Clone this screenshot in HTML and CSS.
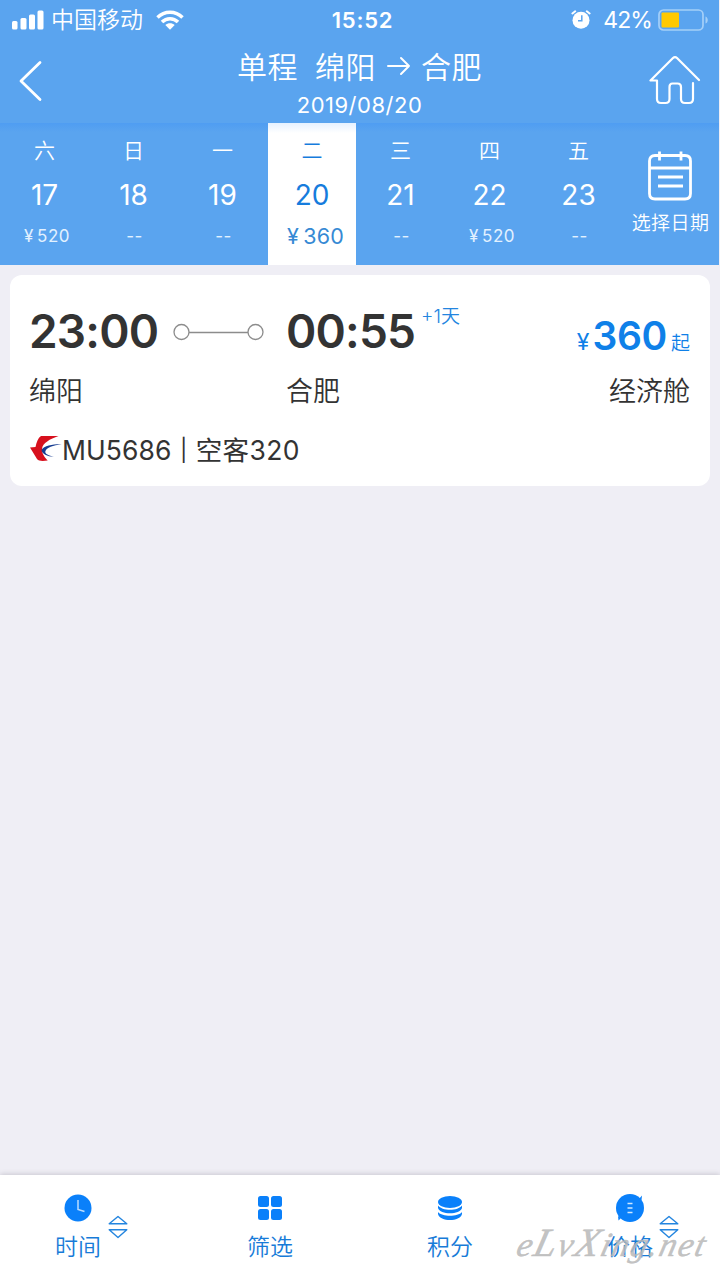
FILE: index.html
```html
<!DOCTYPE html>
<html lang="zh-CN">
<head>
<meta charset="utf-8">
<title>单程 绵阳 → 合肥</title>
<link rel="stylesheet" href="styles.css">
</head>
<body>
<div class="screen">
  <header class="header">
    <div class="status">
      <div class="status-left">
        <svg class="signal" width="32" height="20" viewBox="0 0 32 20" fill="#fff"><rect x="0" y="11" width="5.500" height="8.500" rx="1.500"/><rect x="8.500" y="8" width="6" height="11.500" rx="1.500"/><rect x="17" y="4.500" width="6" height="15" rx="1.500"/><rect x="25.500" y="0.500" width="6" height="19" rx="1.500"/></svg>
        <span class="carrier">中国移动</span>
        <svg class="wifi" width="28" height="20" viewBox="0 0 28 20"><g fill="none" stroke="#fff" stroke-width="3.500"><path d="M1.500 7.500C8.500 0.500 19.500 0.500 26.500 7.500"/><path d="M6 12C10.500 7.500 17.500 7.500 22 12"/></g><path fill="#fff" d="M9.300 15C12 12.700 16 12.700 18.700 15L14 19.700Z"/></svg>
      </div>
      <div class="clock">15:52</div>
      <div class="status-right">
        <svg width="20" height="20" viewBox="0 0 20 20"><circle cx="10" cy="10.200" r="8.500" fill="#fff"/><path d="M1.400 3.500L4.200 1.300M18.600 3.500L15.800 1.300" stroke="#fff" stroke-width="2" stroke-linecap="round"/><path d="M10.800 5.300V10.700H7" fill="none" stroke="#5aa4ef" stroke-width="1.500"/></svg>
        <span class="battery-text">42%</span>
        <svg class="battery" width="52" height="22" viewBox="0 0 52 22"><rect x="1" y="1" width="44" height="20" rx="4.500" fill="none" stroke="#a4cff8" stroke-width="1.700"/><rect x="3.500" y="3.500" width="17.500" height="15" rx="1" fill="#ffc900"/><path d="M47.500 7.500C50.500 8.500 50.500 13.500 47.500 14.500Z" fill="#a4cff8"/></svg>
      </div>
    </div>
    <div class="nav">
      <svg class="back" width="26" height="42" viewBox="0 0 26 42"><path d="M22 2.500L3 21L22 39.500" fill="none" stroke="#fff" stroke-width="2.800" stroke-linecap="round" stroke-linejoin="round"/></svg>
      <div class="titles">
        <h1 class="title"><span>单程</span><span class="from">绵阳</span><svg width="24" height="20" viewBox="0 0 24 20"><path d="M1 10H22M14 2L22 10L14 18" fill="none" stroke="#fff" stroke-width="2" stroke-linecap="round" stroke-linejoin="round"/></svg><span>合肥</span></h1>
        <div class="subtitle">2019/08/20</div>
      </div>
      <svg class="home" width="52" height="50" viewBox="0 0 52 50"><path d="M50 25L28 3Q26 1 24 3L1.500 25.500H8V44Q8 48 12 48H16.500Q20.500 48 20.500 44V32Q20.500 28.500 23.500 28.500H28.500Q32 28.500 32 32V44Q32 48 36 48H40Q44 48 44 44V28" fill="none" stroke="#fff" stroke-width="2.200" stroke-linecap="round" stroke-linejoin="round"/></svg>
    </div>
  </header>

  <div class="dates">
    <div class="day"><span class="week">六</span><span class="num">17</span><span class="price">¥ 520</span></div>
    <div class="day"><span class="week">日</span><span class="num">18</span><span class="price dash">--</span></div>
    <div class="day"><span class="week">一</span><span class="num">19</span><span class="price dash">--</span></div>
    <div class="day active"><span class="week">二</span><span class="num">20</span><span class="price">¥ 360</span></div>
    <div class="day"><span class="week">三</span><span class="num">21</span><span class="price dash">--</span></div>
    <div class="day"><span class="week">四</span><span class="num">22</span><span class="price">¥ 520</span></div>
    <div class="day"><span class="week">五</span><span class="num">23</span><span class="price dash">--</span></div>
    <div class="pick">
      <svg width="44" height="50" viewBox="0 0 44 50" fill="none" stroke="#fff" stroke-width="2.800"><path d="M11 4.500H7Q1.500 4.500 1.500 10V42.500Q1.500 48 7 48H37Q42.500 48 42.500 42.500V10Q42.500 4.500 37 4.500H33M11 4.500H33M1.500 17H42.500M10 26H35M10 35H35M11.500 0.500V9.500M33 0.500V9.500"/></svg>
      <span>选择日期</span>
    </div>
  </div>

  <main class="list">
    <article class="card">
      <div class="row times">
        <span class="time">23:00</span>
        <svg class="route" width="91" height="18" viewBox="0 0 91 18" fill="none" stroke="#8c8c8c" stroke-width="1.300"><circle cx="8.500" cy="9" r="7.500"/><circle cx="82.500" cy="9" r="7.500"/><path d="M16 9.500H75"/></svg>
        <span class="time">00:55</span>
        <span class="plus">+1天</span>
        <span class="fare"><span class="yen">¥</span><b>360</b><span class="up">起</span></span>
      </div>
      <div class="row cities"><span class="dep">绵阳</span><span>合肥</span><span class="cabin">经济舱</span></div>
      <div class="row flight">
        <svg width="32" height="25" viewBox="0 0 32 25"><path d="M0 11.500L5.500 11C6.500 6 8 2 11 0H28.500C20 3 12.500 7 12 13C12 18 14.500 21 17.700 24.500C13.500 25 9 25.500 7 23L0 11.500Z" fill="#d7101d"/><path d="M31.700 8.300C24 8 14 9.500 11.500 14C12 18 17 20.500 24 20.800C18.500 19.500 15 18 15.300 15.500C16.500 11.500 23 9.500 31.700 8.300Z" fill="#173d91"/></svg>
        <span class="code">MU5686</span><span class="bar"> | </span><span class="plane">空客320</span>
      </div>
    </article>
  </main>

  <nav class="tabs">
    <div class="tab first">
      <svg width="28" height="28" viewBox="0 0 28 28"><circle cx="14" cy="14" r="13.500" fill="#0a80fa"/><path d="M14 6V15.500L20.500 17.500" fill="none" stroke="#b9dcff" stroke-width="1.500"/></svg>
      <span class="label">时间</span>
      <svg class="sort" width="20" height="24" viewBox="0 0 20 24"><path d="M10 1.500L18.800 8.700H1.200ZM10 22.500L18.800 14.800H1.200Z" fill="none" stroke="#2385df" stroke-width="1.400" stroke-linejoin="round"/></svg>
    </div>
    <div class="tab">
      <svg width="28" height="28" viewBox="0 0 28 28" fill="#0a80fa"><rect x="2" y="2" width="11" height="11" rx="2.500"/><rect x="15" y="2" width="11" height="11" rx="2.500"/><rect x="2" y="15" width="11" height="11" rx="2.500"/><rect x="15" y="15" width="11" height="11" rx="2.500"/></svg>
      <span class="label">筛选</span>
    </div>
    <div class="tab">
      <svg width="28" height="28" viewBox="0 0 28 28" fill="#0a80fa"><ellipse cx="14" cy="8" rx="12" ry="6"/><path d="M2 11.500C6 17.200 22 17.200 26 11.500V14C24 21 4 21 2 14ZM2 18C6 23 22 23 26 18V20C24 28 4 28 2 20Z"/></svg>
      <span class="label">积分</span>
    </div>
    <div class="tab">
      <svg width="30" height="28" viewBox="0 0 30 28"><circle cx="15" cy="14" r="14" fill="#0a80fa"/><path d="M24 5L27 1.500L26.500 6M3 22L3.500 26.500L6 24" fill="#0a80fa"/><path d="M12.500 9.500H17.500M12.500 14H17.500M12.500 18.500H17.500" stroke="#cfe7ff" stroke-width="1.400"/></svg>
      <span class="label">价格</span>
      <svg class="sort" width="20" height="24" viewBox="0 0 20 24"><path d="M10 1.500L18.800 8.700H1.200ZM10 22.500L18.800 14.800H1.200Z" fill="none" stroke="#2385df" stroke-width="1.400" stroke-linejoin="round"/></svg>
    </div>
    <div class="watermark">e<span class="cap">L</span>v<span class="cap">X</span>ing.net</div>
  </nav>
</div>
</body>
</html>
```
FILE: styles.css
```css
* { box-sizing: border-box; }
body {
  margin: 0;
  background: #efeef5;
  color: #333;
  font-family: Inter, "Noto Sans CJK SC", sans-serif;
}
svg { display: block; flex: none; }
.screen { width: 720px; height: 1280px; display: flex; flex-direction: column; overflow: hidden; }

.header { height: 123px; margin-right: 1px; background: #5aa4ef; color: #fff; }
.status { height: 40px; display: grid; grid-template-columns: 1fr auto 1fr; align-items: center; padding: 0 10px 0 12px; }
.status-left, .status-right { display: flex; align-items: center; }
.status-right { justify-content: flex-end; margin-right: -1px; }
.signal { margin-top: -1px; }
.carrier { margin-left: 7px; padding-top: 1px; font-size: 23px; font-weight: 350; line-height: 39px; }
.wifi { margin-left: 13px; margin-top: -1px; }
.clock { margin-left: 4px; font-size: 22px; font-weight: 600; letter-spacing: 0.800px; }
.battery-text { margin: 0 6px 0 12px; font-size: 23px; font-weight: 400; letter-spacing: -0.900px; }

.nav { height: 83px; display: flex; justify-content: space-between; padding: 0 18px; }
.back { margin-top: 20px; }
.titles { display: flex; flex-direction: column; align-items: center; margin-left: 26px; }
.title { display: flex; align-items: center; margin: 0; height: 52px; font-size: 30px; font-weight: 350; letter-spacing: 0.500px; }
.title span { position: relative; top: -1px; }
.title .from { margin: 0 11px 0 17px; }
.title svg { margin-right: 10px; }
.subtitle { font-size: 22px; line-height: 26px; font-weight: 400; letter-spacing: 0.500px; }
.home { margin-top: 15px; }

.dates { height: 142px; margin-right: 1px; display: grid; grid-template-columns: repeat(7, 89px) 1fr; background: linear-gradient(#4f9df2, #5aa4ef 9px); color: #fff; }
.day { display: flex; flex-direction: column; align-items: center; }
.week { height: 53px; line-height: 55px; font-size: 21px; font-weight: 350; }
.num { height: 38px; line-height: 38px; font-size: 28px; font-weight: 400; }
.price { height: 46px; line-height: 45px; font-size: 17px; font-weight: 400; margin-left: 5px; color: #e2f1ff; letter-spacing: 0.500px; word-spacing: -2px; }
.price.dash { margin-left: 2px; }
.day.active { width: 88px; margin-left: 1px; background: linear-gradient(#e6f1ff, #fff 10px); color: #167cdd; }
.day.active .price { font-size: 21.500px; margin-left: 7px; color: #3689d4; letter-spacing: 0.200px; }
.pick { display: flex; flex-direction: column; align-items: center; padding-top: 28px; margin-left: -1px; font-size: 19px; font-weight: 350; white-space: nowrap; }
.pick span { line-height: 46px; letter-spacing: 0.400px; }
.pick svg { margin-right: 1px; }

.list { flex: 1; padding: 10px; }
.card { height: 211px; padding: 20px 20px 20px 19px; border-radius: 12px; background: #fff; }
.row { display: flex; }
.times { height: 73px; }
.time { font-size: 46px; font-weight: 600; line-height: 73px; width: 130px; letter-spacing: -0.800px; }
.route { margin: 28px 22px 0 14px; }
.plus { margin-left: 5px; font-size: 19px; line-height: 43px; color: #2385df; font-weight: 350; }
.fare { margin-left: auto; display: flex; align-items: baseline; line-height: 81px; color: #0f80e8; }
.fare b { font-size: 39px; font-weight: 600; letter-spacing: -0.300px; }
.yen { font-size: 23px; margin-right: 3px; }
.up { font-size: 19px; font-weight: 350; margin-left: 4px; }
.cities { height: 47px; line-height: 48px; font-size: 27px; font-weight: 350; }
.dep { width: 257px; }
.cabin { margin-left: auto; }
.flight { align-items: center; height: 69px; line-height: 70px; font-size: 26.500px; font-weight: 380; }
.flight svg { margin-left: 1px; margin-top: -2px; }
.code { letter-spacing: 0.100px; }
.bar { width: 24px; text-align: center; font-size: 22px; line-height: 68px; }
.plane { letter-spacing: 0.400px; }

.tabs { position: relative; height: 105px; display: grid; grid-template-columns: repeat(4, 180px); background: #fff; box-shadow: 0 -1px 5px #c9c8d0; }
.tab { position: relative; display: flex; flex-direction: column; align-items: center; padding-top: 19px; }
.tab.first { right: 12px; }
.label { line-height: 50px; font-size: 23px; font-weight: 350; color: #177bd8; }
.sort { position: absolute; left: 119px; top: 40px; }
.tab.first .sort { left: 120px; }
.watermark { position: absolute; left: 518px; top: 41px; font: italic 34px/54px "Liberation Serif", serif; letter-spacing: 1.700px; color: rgba(185, 185, 185, 0.850); -webkit-text-stroke: 0.500px rgba(185, 185, 185, 0.850); transform: skewX(-14deg); white-space: nowrap; }
.watermark .cap { font-size: 40px; }
```
